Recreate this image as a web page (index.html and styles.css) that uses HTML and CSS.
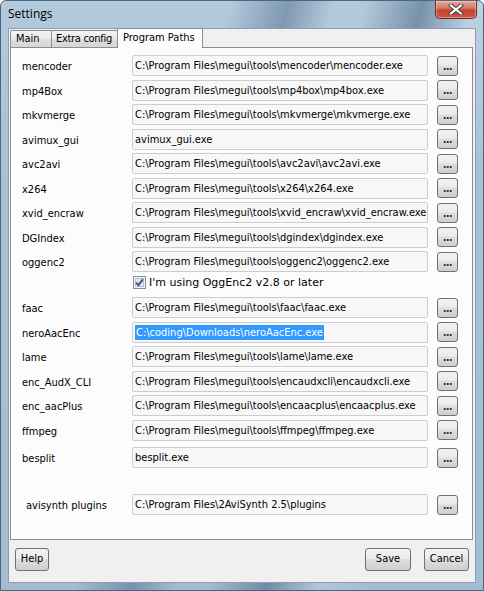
FILE: index.html
```html
<!DOCTYPE html>
<html>
<head>
<meta charset="utf-8">
<title>Settings</title>
<link rel="stylesheet" href="styles.css">
</head>
<body>
<div class="window">
  <div class="titlebar">
    <span class="title">Settings</span>
    <div class="close">
      <svg width="16" height="11" viewBox="0 0 16 11">
        <path d="M3 1.5 L13 9.5 M13 1.5 L3 9.5" stroke="#3b3b3b" stroke-width="4" stroke-linecap="square"/>
        <path d="M3 1.5 L13 9.5 M13 1.5 L3 9.5" stroke="#ffffff" stroke-width="2.2" stroke-linecap="square"/>
      </svg>
    </div>
  </div>
  <div class="client">
    <div class="tabs">
      <div class="tab tab-main">Main</div>
      <div class="tab tab-extra">Extra config</div>
      <div class="tab tab-paths active">Program Paths</div>
    </div>
    <div class="panel">
      <div class="row"><span class="label">mencoder</span><div class="field">C:\Program Files\megui\tools\mencoder\mencoder.exe</div><div class="browse">...</div></div>
      <div class="row"><span class="label">mp4Box</span><div class="field">C:\Program Files\megui\tools\mp4box\mp4box.exe</div><div class="browse">...</div></div>
      <div class="row"><span class="label">mkvmerge</span><div class="field">C:\Program Files\megui\tools\mkvmerge\mkvmerge.exe</div><div class="browse">...</div></div>
      <div class="row"><span class="label">avimux_gui</span><div class="field">avimux_gui.exe</div><div class="browse">...</div></div>
      <div class="row"><span class="label">avc2avi</span><div class="field">C:\Program Files\megui\tools\avc2avi\avc2avi.exe</div><div class="browse">...</div></div>
      <div class="row"><span class="label">x264</span><div class="field">C:\Program Files\megui\tools\x264\x264.exe</div><div class="browse">...</div></div>
      <div class="row"><span class="label">xvid_encraw</span><div class="field">C:\Program Files\megui\tools\xvid_encraw\xvid_encraw.exe</div><div class="browse">...</div></div>
      <div class="row"><span class="label">DGIndex</span><div class="field">C:\Program Files\megui\tools\dgindex\dgindex.exe</div><div class="browse">...</div></div>
      <div class="row"><span class="label">oggenc2</span><div class="field">C:\Program Files\megui\tools\oggenc2\oggenc2.exe</div><div class="browse">...</div></div>
      <div class="check-row">
        <span class="checkbox">
          <svg width="13" height="13" viewBox="0 0 13 13">
            <rect x="0.5" y="0.5" width="12" height="12" fill="#f4f4f4" stroke="#8e8f8f"/>
            <rect x="2.5" y="2.5" width="8" height="8" fill="#dfe6ee" stroke="#b6bec8"/>
            <path d="M3.2 6.6 L5.4 9.2 L9.8 3.4" fill="none" stroke="#3c4e8a" stroke-width="1.8"/>
          </svg>
        </span>
        <span class="check-text">I'm using OggEnc2 v2.8 or later</span>
      </div>
      <div class="row"><span class="label">faac</span><div class="field">C:\Program Files\megui\tools\faac\faac.exe</div><div class="browse">...</div></div>
      <div class="row"><span class="label">neroAacEnc</span><div class="field"><span class="selected">C:\coding\Downloads\neroAacEnc.exe</span></div><div class="browse">...</div></div>
      <div class="row"><span class="label">lame</span><div class="field">C:\Program Files\megui\tools\lame\lame.exe</div><div class="browse">...</div></div>
      <div class="row"><span class="label">enc_AudX_CLI</span><div class="field">C:\Program Files\megui\tools\encaudxcli\encaudxcli.exe</div><div class="browse">...</div></div>
      <div class="row"><span class="label">enc_aacPlus</span><div class="field">C:\Program Files\megui\tools\encaacplus\encaacplus.exe</div><div class="browse">...</div></div>
      <div class="row"><span class="label">ffmpeg</span><div class="field">C:\Program Files\megui\tools\ffmpeg\ffmpeg.exe</div><div class="browse">...</div></div>
      <div class="row row-besplit"><span class="label">besplit</span><div class="field">besplit.exe</div><div class="browse">...</div></div>
      <div class="row row-avisynth"><span class="label label-indent">avisynth plugins</span><div class="field">C:\Program Files\2AviSynth 2.5\plugins</div><div class="browse">...</div></div>
    </div>
    <div class="footer">
      <div class="button btn-help">Help</div>
      <div class="spacer"></div>
      <div class="button btn-save">Save</div>
      <div class="button btn-cancel">Cancel</div>
    </div>
  </div>
</div>
</body>
</html>
```

FILE: styles.css
```css
* { box-sizing: border-box; }

html, body {
  margin: 0;
  padding: 0;
  width: 484px;
  height: 591px;
  overflow: hidden;
  background: #ffffff;
}

body {
  font-family: "DejaVu Sans Condensed", "DejaVu Sans", sans-serif;
  font-size: 11px;
  color: #000;
}

.window {
  width: 484px;
  height: 591px;
  border: 1px solid #4a6782;
  border-radius: 6px 6px 0 0;
  padding: 0 7px 7px 7px;
  display: flex;
  flex-direction: column;
  background:
    linear-gradient(105deg, rgba(255,255,255,0) 36%, rgba(45,75,110,0.38) 45%, rgba(255,255,255,0) 52%, rgba(255,255,255,0) 57%, rgba(40,70,105,0.42) 66%, rgba(255,255,255,0.15) 74%, rgba(255,255,255,0) 82%),
    linear-gradient(180deg, #b3c9dc 0%, #a9c0d5 30%, #a4bcd2 100%);
}

.titlebar {
  height: 27px;
  display: flex;
  align-items: flex-start;
  justify-content: space-between;
}

.title {
  font-family: "Open Sans", "Liberation Sans", sans-serif;
  font-size: 12px;
  margin-top: 4px;
  color: #000;
}

.close {
  width: 42px;
  height: 18px;
  margin-right: -1px;
  border: 1px solid #6b2a22;
  border-top: none;
  border-radius: 0 0 5px 5px;
  background: linear-gradient(180deg, #e7a79a 0%, #d77a68 40%, #c2452f 55%, #c95a43 100%);
  display: flex;
  align-items: center;
  justify-content: center;
  box-shadow: inset 0 0 0 1px rgba(255,255,255,0.35);
}

.client {
  flex: 1;
  background: #f0f0f0;
  border: 1px solid #8a9db2;
  padding: 0 2px 0 1px;
  display: flex;
  flex-direction: column;
}

.tabs {
  height: 18px;
  display: flex;
  align-items: flex-end;
  position: relative;
  z-index: 1;
}

.tab {
  height: 17px;
  border: 1px solid #8c8e94;
  border-bottom: none;
  border-radius: 2px 2px 0 0;
  background: linear-gradient(180deg, #f3f3f3 0%, #ebebeb 45%, #dddddd 55%, #d6d6d6 100%);
  padding: 1px 0 0 5px;
  white-space: nowrap;
  overflow: hidden;
}

.tab-main { width: 42px; }
.tab-extra { width: 67px; margin-left: -1px; padding-left: 4px; letter-spacing: -0.3px; }
.tab-paths { width: 86px; }

.tab.active {
  height: 20px;
  margin-bottom: -1px;
  margin-left: -1px;
  background: #fcfcfc;
  padding-top: 2px;
}

.panel {
  height: 493px;
  border: 1px solid #898c95;
  background: #fcfcfc;
  padding: 7px 0 0 11px;
  display: flex;
  flex-direction: column;
  gap: 3.5px;
}

.row {
  height: 21px;
  display: flex;
  align-items: center;
}

.label {
  width: 110px;
  flex: none;
  padding-top: 2px;
}

.label-indent { padding-left: 4px; }

.field {
  width: 296px;
  height: 21px;
  flex: none;
  border: 1px solid #cdcdcd;
  border-radius: 2px;
  background: #f7f7f7;
  padding: 3px 0 0 2px;
  white-space: nowrap;
  overflow: hidden;
}

.selected {
  background: #3399ff;
  color: #ffffff;
  padding: 1px;
}

.browse {
  width: 21px;
  height: 20px;
  margin-left: 9px;
  flex: none;
  border: 1px solid #707070;
  border-radius: 3px;
  background: linear-gradient(180deg, #f2f2f2 0%, #ebebeb 45%, #dddddd 50%, #cfcfcf 100%);
  font-size: 10px;
  font-weight: bold;
  color: #222;
  text-align: center;
  line-height: 20px;
  letter-spacing: -0.5px;
}

.check-row {
  height: 18px;
  display: flex;
  align-items: center;
  padding-left: 111px;
}

.checkbox {
  width: 13px;
  height: 13px;
  display: flex;
  margin-right: 3px;
  margin-top: -5px;
}

.check-text {
  margin-top: -5px;
  font-family: "DejaVu Sans", sans-serif;
}

.row-besplit { margin-top: 3px; }
.row-avisynth { margin-top: 22.5px; }

.footer {
  flex: 1;
  display: flex;
  align-items: flex-start;
  padding: 8px 4px 0 5px;
}

.spacer { flex: 1; }

.button {
  height: 23px;
  border: 1px solid #707070;
  border-radius: 3px;
  background: linear-gradient(180deg, #f2f2f2 0%, #ebebeb 45%, #dddddd 50%, #cfcfcf 100%);
  text-align: center;
  line-height: 20px;
}

.btn-help { width: 34px; }
.btn-save { width: 46px; margin-right: 13px; }
.btn-cancel { width: 45px; }
```
